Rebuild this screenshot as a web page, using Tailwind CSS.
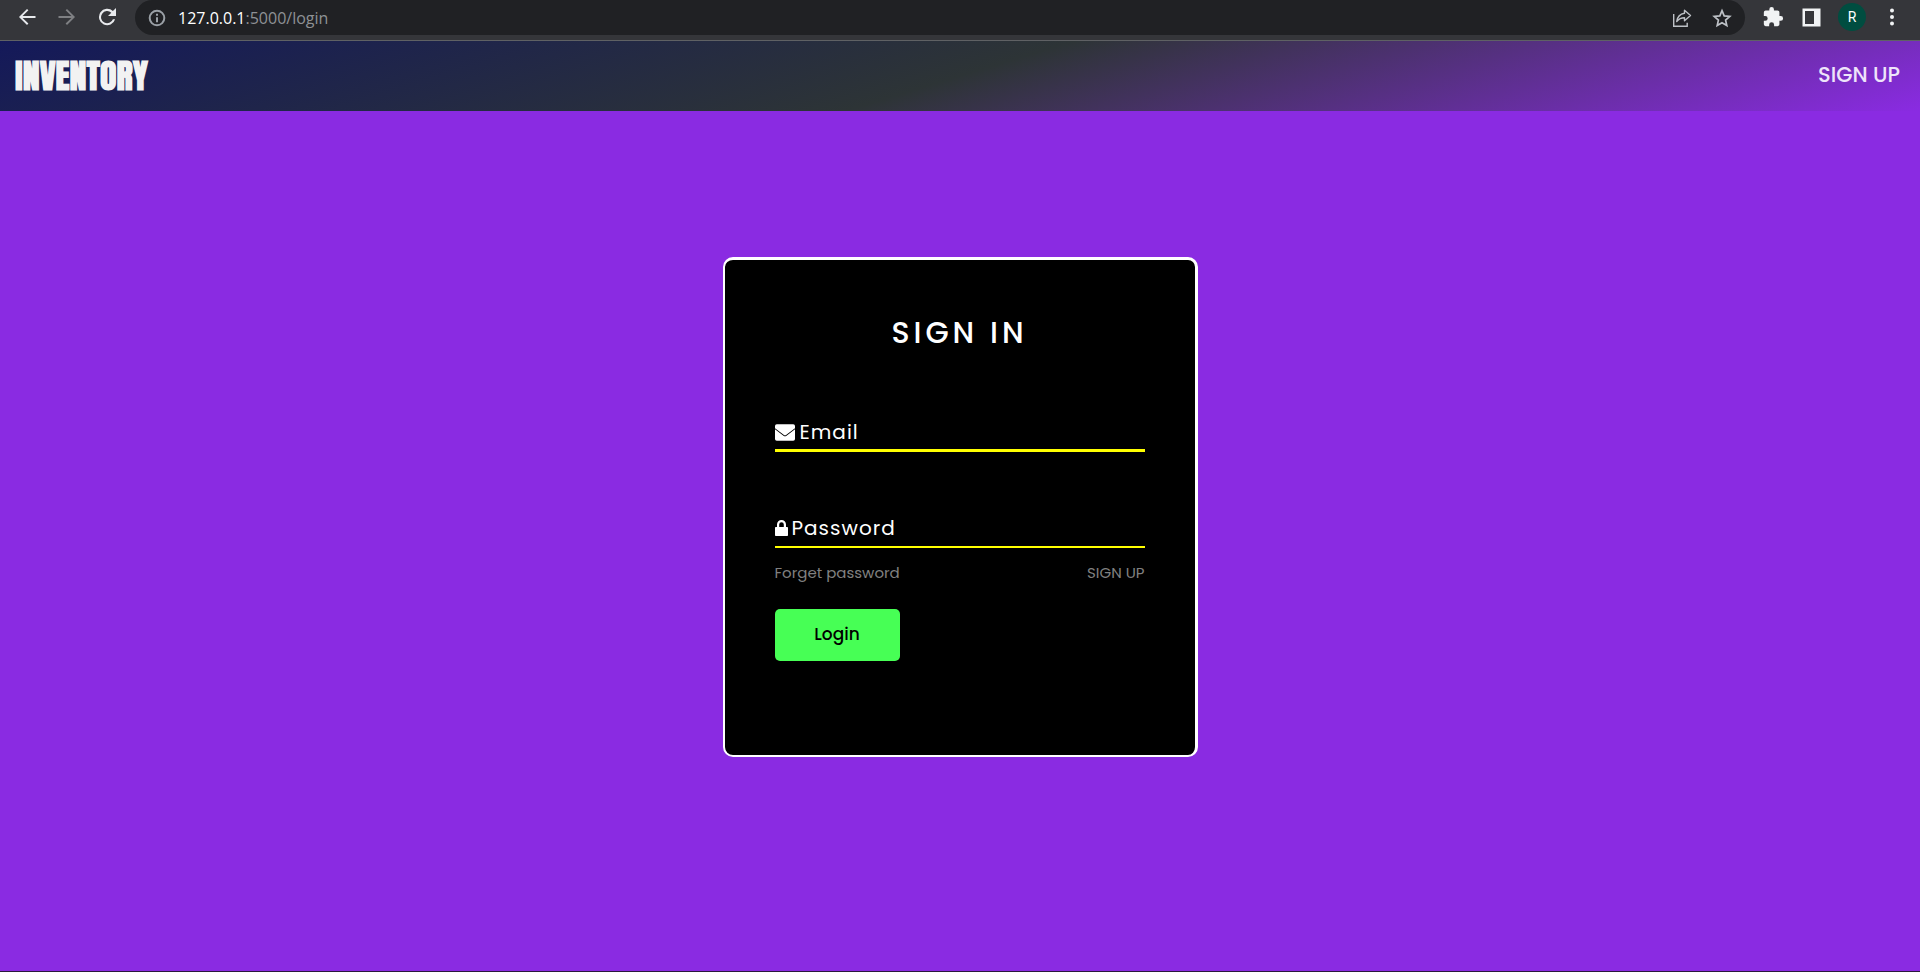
<!DOCTYPE html>
<html lang="en">
<head>
<meta charset="utf-8">
<title>Inventory – Sign in</title>
<script src="https://cdn.jsdelivr.net/npm/@tailwindcss/browser@4"></script>
</head>
<body class="flex min-h-screen flex-col border-b border-[#2b1a3d] bg-[#8a2be2] font-[Poppins,Inter,sans-serif]">

<!-- Browser toolbar -->
<div class="flex h-[41px] items-start border-b border-[#5f6164] bg-[#35363a]">
  <div class="flex h-[34px] w-[135px] shrink-0 items-center gap-4 pl-[15px]">
    <button aria-label="Back" class="text-[#e8eaed]"><svg class="size-6" viewBox="0 0 24 24" fill="currentColor"><path d="M20.500 11.100H7.600l5.800-5.800L12 4l-8 8 8 8 1.400-1.400-5.800-5.700h12.900z"/></svg></button>
    <button aria-label="Forward" class="text-[#7f8083]"><svg class="size-6" viewBox="0 0 24 24" fill="currentColor"><path d="M3.500 11.100h12.900l-5.800-5.800L12 4l8 8-8 8-1.400-1.400 5.800-5.700H3.500z"/></svg></button>
    <button aria-label="Reload" class="text-[#e8eaed]"><svg class="size-6" viewBox="0 0 24 24" fill="currentColor"><path d="M17.900 6.100A8.200 8.200 0 1 0 20.100 14.200h-2.200A6.100 6.100 0 1 1 16.300 7.700L13 11h8V3z"/></svg></button>
  </div>
  <div class="flex h-[35px] flex-1 items-center rounded-full bg-[#202124] pl-3 pr-[13px]">
    <svg class="mr-[11px] size-5 text-[#9aa0a6]" viewBox="0 0 20 20" fill="none" stroke="currentColor" stroke-width="2"><circle cx="10" cy="10" r="7.300"/><path d="M10 9.200v5M10 5.800v1.900"/></svg>
    <div class="flex-1 font-['Segoe_UI','Open_Sans',sans-serif] text-base text-[#8e9195]"><span class="text-white">127.0.0.1</span>:5000/login</div>
    <button aria-label="Share" class="mr-5 text-[#bdc1c6]"><svg class="size-5" viewBox="0 0 20 20" fill="none" stroke="currentColor" stroke-width="1.400"><path d="M1.700 6v12.300h13.500v-3.500"/><path d="M12.500 2.300l6 5.200-6 5.200V9.800c-3.300 0-5.600 1-7.800 3.700.6-4 3-7.600 7.800-8.300z" stroke-linejoin="round"/></svg></button>
    <button aria-label="Bookmark" class="text-[#bdc1c6]"><svg class="size-5" viewBox="0 0 20 20" fill="none" stroke="currentColor" stroke-width="1.700"><path d="M10 2.700l2.200 5.200 5.600.5-4.200 3.700 1.200 5.500L10 14.700l-4.800 2.900 1.200-5.500-4.200-3.700 5.600-.5z"/></svg></button>
  </div>
  <div class="flex h-[34px] shrink-0 items-center pl-[17px] pr-[26px] text-[#f1f3f4]">
    <button aria-label="Extensions" class="mr-[18px]"><svg class="size-[22px]" viewBox="0 0 24 24" fill="currentColor"><path d="M20.500 11H19V7a2 2 0 0 0-2-2h-4V3.500a2.500 2.500 0 0 0-5 0V5H4a2 2 0 0 0-2 2v3.800h1.500a2.700 2.700 0 0 1 0 5.400H2V20a2 2 0 0 0 2 2h3.800v-1.500a2.700 2.700 0 0 1 5.400 0V22H17a2 2 0 0 0 2-2v-4h1.500a2.500 2.500 0 0 0 0-5z"/></svg></button>
    <button aria-label="Side panel" class="mr-[17px]"><svg class="size-[19px]" viewBox="0 0 19 19" fill="currentColor"><path fill-rule="evenodd" d="M.5.500h18v18H.5zM3 3v13h9V3z"/></svg></button>
    <button aria-label="Profile" class="mr-6 flex size-7 items-center justify-center rounded-full bg-[#004d40] font-[Roboto,sans-serif] text-sm text-white">R</button>
    <button aria-label="Menu"><svg class="h-5 w-1" viewBox="0 0 4 20" fill="currentColor"><circle cx="2" cy="3.500" r="2"/><circle cx="2" cy="10" r="2"/><circle cx="2" cy="16.500" r="2"/></svg></button>
  </div>
</div>

<header class="flex h-[70px] items-center justify-between bg-[linear-gradient(163deg,#14195a_0%,#2d3436_50%,#8a2be2_100%)] pl-[15px] pr-5">
  <a href="#" class="font-[Impact,Anton,'Liberation_Sans',sans-serif] text-[34px] leading-none font-bold text-[#f2f2f2]">INVENTORY</a>
  <a href="#" class="pb-0.5 text-[21px] font-medium text-[#eee4fa]">SIGN UP</a>
</header>

<main class="flex flex-1 items-center justify-center pb-[68px]">
  <form class="min-h-[500px] w-[475px] rounded-[10px] border-x-[3px] border-t-[3px] border-b-2 border-l-2 border-white bg-black px-[50px] pt-[49px]">
    <h1 class="text-center text-[30px] leading-[48px] font-medium tracking-[4px] text-white">SIGN IN</h1>
    <div class="mt-[58px] flex h-[37px] items-center border-b-[3px] border-[#ffff00] text-white">
      <label for="email" class="flex items-center gap-[5px] text-xl tracking-[1px]">
        <svg class="h-[17px] w-5" viewBox="0 0 20 17" fill="currentColor"><path d="M0 2a1.800 1.800 0 0 1 1.800-1.800h16.400A1.800 1.800 0 0 1 20 2v2.300l-9 6.800q-1 .7-2 0L0 4.300z"/><path d="M0 5.200l8.500 6.500q1.500 1 3 0l8.500-6.500V15a1.800 1.800 0 0 1-1.800 1.800H1.800A1.800 1.800 0 0 1 0 15z"/></svg>
        Email
      </label>
      <input id="email" type="email" class="min-w-0 flex-1 bg-transparent text-xl outline-none">
    </div>
    <div class="mt-[58px] flex h-[38px] items-center border-b-2 border-[#ffff00] text-white">
      <label for="password" class="flex items-center gap-1 text-xl tracking-[1px]">
        <svg class="h-4 w-[13px]" viewBox="0 0 13 16" fill="currentColor"><path fill-rule="evenodd" d="M2 7V4.500a4.500 4.500 0 0 1 9 0V7h1.200q.8 0 .8.800v7.400q0 .8-.8.800H.8q-.8 0-.8-.8V7.800Q0 7 .8 7zm2.200 0h4.600V4.500a2.300 2.300 0 0 0-4.600 0z"/></svg>
        Password
      </label>
      <input id="password" type="password" class="min-w-0 flex-1 bg-transparent text-xl outline-none">
    </div>
    <div class="mt-[13px] flex justify-between text-[15px] leading-6 text-[#808080]">
      <a href="#">Forget password</a>
      <a href="#">SIGN UP</a>
    </div>
    <button type="submit" class="mt-6 h-[52px] w-[125px] rounded-[5px] bg-[#47ff55] text-[17px] font-medium text-black">Login</button>
  </form>
</main>
</body>
</html>
